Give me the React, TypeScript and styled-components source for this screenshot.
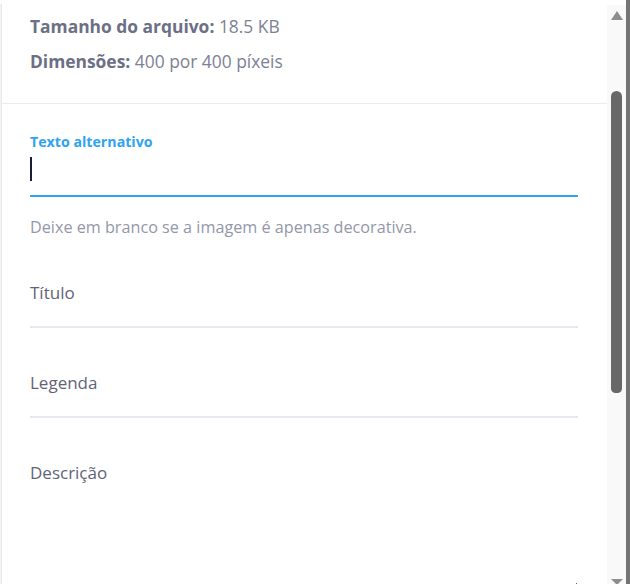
import styled, { createGlobalStyle } from "styled-components"

const GlobalStyle = createGlobalStyle`
  html, body {
    margin: 0;
    padding: 0;
    background: #fff;
  }
  * {
    box-sizing: border-box;
  }
`

const Frame = styled.div`
  display: flex;
  width: 630px;
  height: 584px;
  overflow: hidden;
  font-family: "Open Sans", "Liberation Sans", sans-serif;
  background: #fff;
`

const LeftEdge = styled.div`
  width: 2px;
  margin-top: 4px;
  border-left: 1px solid #f3f3f3;
  background: #e8e8e8;
  flex-shrink: 0;
`

const Panel = styled.div`
  flex: 1;
  display: flex;
  flex-direction: column;
  min-width: 0;
`

const Details = styled.div`
  padding: 9px 0 24px 28px;
  border-bottom: 1px solid #ececec;
`

const DetailLine = styled.div`
  font-size: 17.4px;
  line-height: 35px;
  color: #7d8195;

  strong {
    font-weight: 700;
    color: #6b7085;
  }
`

const Settings = styled.div`
  padding: 28px 29px 0 28px;
  display: flex;
  flex-direction: column;
`

const Label = styled.label`
  display: block;
  font-size: 14.2px;
  font-weight: 700;
  line-height: 20px;
  color: #2ea3f2;
`

const InputWrap = styled.div`
  position: relative;
`

const TextInput = styled.input<{ active?: boolean }>`
  display: block;
  width: 100%;
  height: 45px;
  padding: 0;
  border: 0;
  border-bottom: 2px solid ${({ active }) => (active ? "#2ea3f2" : "#e8e8ef")};
  outline: none;
  background: transparent;
  font-family: inherit;
  font-size: 17px;
  color: #4c5066;
`

const Caret = styled.span`
  position: absolute;
  left: 0;
  top: 5px;
  width: 2px;
  height: 24px;
  background: #1c1c3c;
`

const Help = styled.p`
  margin: 19px 0 0;
  font-size: 16.2px;
  line-height: 22px;
  color: #9397a9;
`

const Field = styled.div<{ first?: boolean }>`
  padding: 43px 0 21px;
  border-bottom: 2px solid #e8e8ef;
`

const FieldLabel = styled.div`
  font-size: 17px;
  line-height: 24px;
  color: #5f6378;
`

const NotesWrap = styled.div`
  padding-top: 43px;
`

const Notes = styled.textarea`
  display: block;
  width: 100%;
  height: 130px;
  padding: 0;
  border: 0;
  outline: none;
  resize: vertical;
  background: transparent;
  font-family: inherit;
  font-size: 17px;
  line-height: 24px;
  color: #5f6378;

  &::placeholder {
    color: #5f6378;
    opacity: 1;
  }
`

const Scrollbar = styled.div`
  width: 19px;
  margin-top: 5px;
  background: #f9f9f9;
  display: flex;
  flex-direction: column;
  align-items: center;
  flex-shrink: 0;
`

const Arrow = styled.div<{ down?: boolean }>`
  width: 0;
  height: 0;
  margin-top: ${({ down }) => (down ? "auto" : "6px")};
  border-left: 6px solid transparent;
  border-right: 6px solid transparent;
  ${({ down }) => (down ? "border-top: 6px solid #8e8e8e;" : "border-bottom: 9px solid #8e8e8e;")}
  transform: translateY(${({ down }) => (down ? "1px" : "0")});
`

const Thumb = styled.div`
  width: 11px;
  height: 302px;
  margin-top: 71px;
  border-radius: 6px 6px 5px 5px;
  background: #686868;
`

const RightEdge = styled.div`
  width: 4px;
  background: #747474;
  flex-shrink: 0;
`

export default function App() {
  return (
    <>
      <GlobalStyle />
      <Frame>
        <LeftEdge />
        <Panel>
          <Details>
            <DetailLine>
              <strong>Tamanho do arquivo:</strong> 18.5 KB
            </DetailLine>
            <DetailLine>
              <strong>Dimensões:</strong> 400 por 400 píxeis
            </DetailLine>
          </Details>
          <Settings>
            <Label htmlFor="alt-text">Texto alternativo</Label>
            <InputWrap>
              <TextInput id="alt-text" active readOnly />
              <Caret />
            </InputWrap>
            <Help>Deixe em branco se a imagem é apenas decorativa.</Help>
            <Field>
              <FieldLabel>Título</FieldLabel>
            </Field>
            <Field>
              <FieldLabel>Legenda</FieldLabel>
            </Field>
            <NotesWrap>
              <Notes placeholder="Descrição" />
            </NotesWrap>
          </Settings>
        </Panel>
        <Scrollbar>
          <Arrow />
          <Thumb />
          <Arrow down />
        </Scrollbar>
        <RightEdge />
      </Frame>
    </>
  )
}
